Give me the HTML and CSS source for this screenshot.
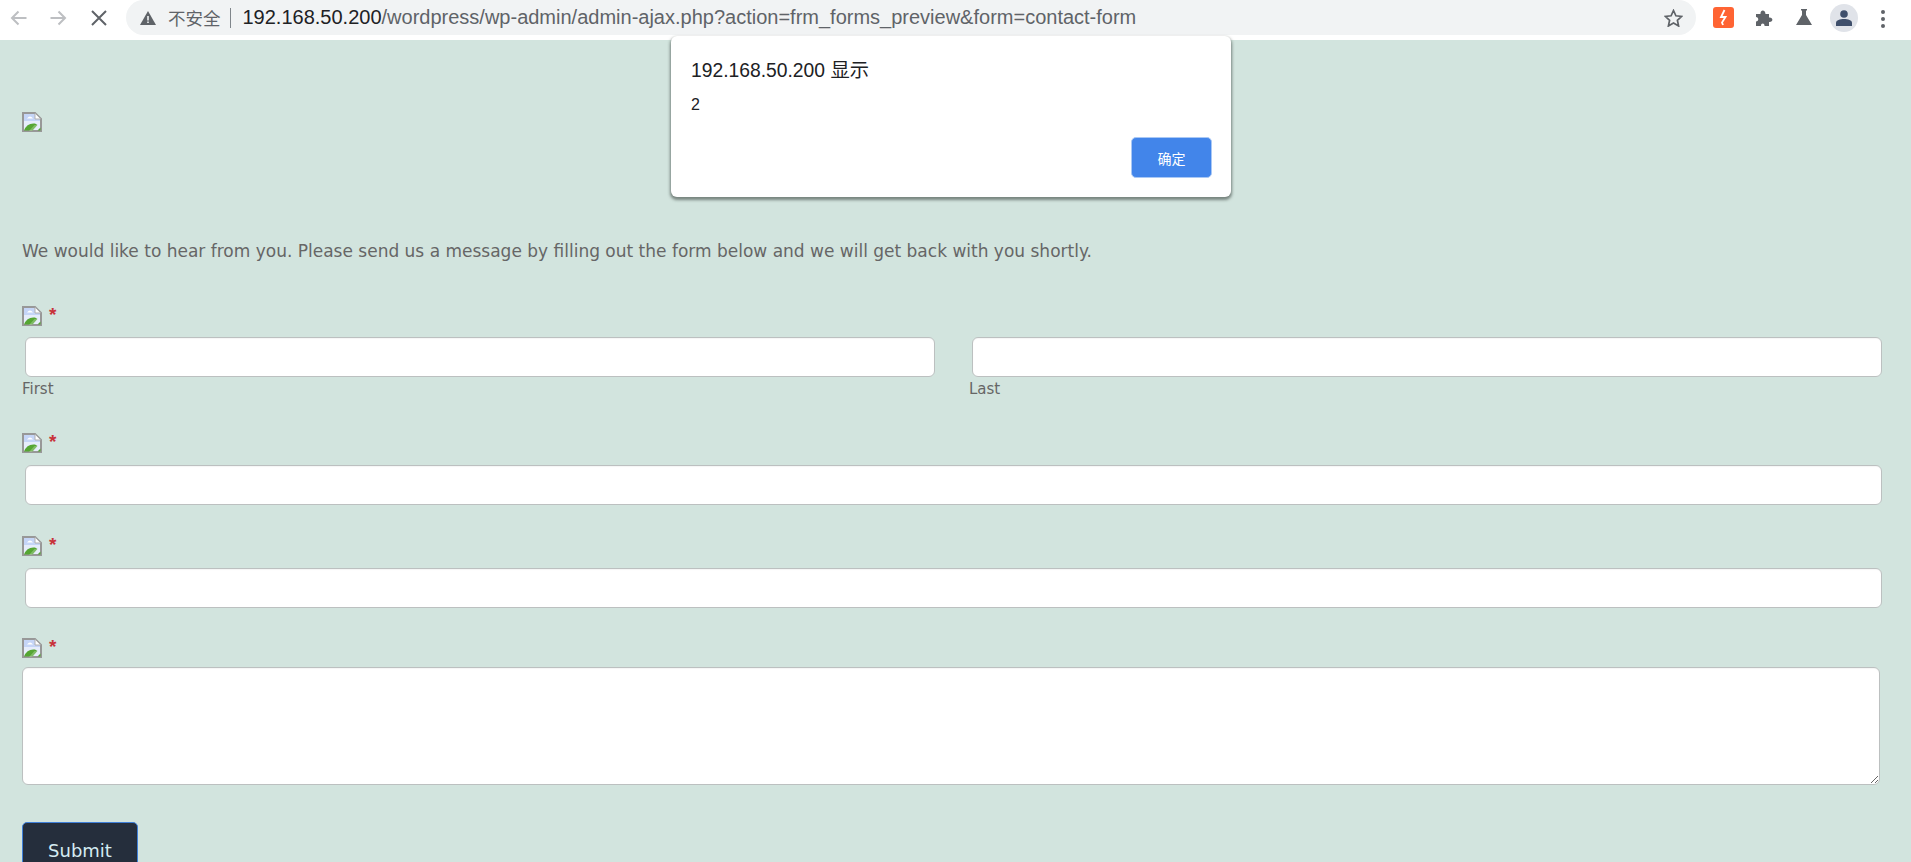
FILE: index.html
```html
<!DOCTYPE html>
<html>
	<head>
		<meta charset="utf-8">
		<link rel="stylesheet" href="styles.css">
	</head>
	<body>
		<svg class="defs" width="0" height="0">
			<symbol id="brokenImg" viewBox="0 0 20 20">
				<path d="M1 1H13L19 7V19H1Z" fill="#c5d5f7" stroke="#989898" stroke-width="2"/>
				<path d="M2 9H18V18H2Z" fill="#e6edfb"/>
				<path d="M5 6.500Q8 2.500 11 6.500Z" fill="#fff"/>
				<path d="M2 18.500Q5 10.500 13 11.500L15.500 13 10.500 18.500Z" fill="#55a633"/>
				<path d="M15.500 18.500L18.500 15.500V18.500Z" fill="#55a633"/>
				<path d="M12.500 13L16.500 13 10 19H7Z" fill="#fff" opacity=".25"/>
				<path d="M13 1.500V7H18.500" fill="#fff" stroke="#b0b0b0"/>
			</symbol>
		</svg>
		<header class="toolbar">
			<svg class="nav-icon" width="17" height="16" viewBox="0 0 17 16"><path d="M16.500 8H2M8.500 1.500L2 8l6.500 6.500" fill="none" stroke="#bdbfc2" stroke-width="2"/></svg>
			<svg class="nav-icon forward" width="17" height="16" viewBox="0 0 17 16"><path d="M.5 8H15M8.500 1.500L15 8l-6.500 6.500" fill="none" stroke="#bdbfc2" stroke-width="2"/></svg>
			<svg class="nav-icon stop" width="16" height="16" viewBox="0 0 16 16"><path d="M1 1L15 15M15 1L1 15" fill="none" stroke="#5f6368" stroke-width="2"/></svg>
			<div class="omnibox">
				<svg class="warn" width="16" height="14" viewBox="0 0 16 14"><path d="M8 0L16 14H0Z" fill="#5f6368"/><path d="M7.200 5H8.800V9.500H7.200ZM7.200 10.500H8.800V12H7.200Z" fill="#f1f3f4"/></svg>
				<span class="not-secure">不安全</span>
				<span class="sep"></span>
				<span class="url"><b>192.168.50.200</b>/wordpress/wp-admin/admin-ajax.php?action=frm_forms_preview&amp;form=contact-form</span>
				<svg class="star" width="19" height="18" viewBox="0 0 19 18"><path d="M9.500 1.500l2.400 5.300 5.800.6-4.300 3.900 1.200 5.700-5.100-2.900-5.100 2.900 1.200-5.700L1.300 7.400l5.800-.6Z" fill="none" stroke="#5f6368" stroke-width="1.700"/></svg>
			</div>
			<svg class="ext-bolt" width="21" height="21" viewBox="0 0 21 21"><rect width="21" height="21" rx="3" fill="#ff6433"/><path d="M11.500 3L8 10H12.500L9 15.500 10 18" fill="none" stroke="#fff" stroke-width="1.800"/></svg>
			<svg class="ext-puzzle" width="18" height="18" viewBox="0 0 18 18"><path d="M1 5H5.500C5 1 10 0 10.500 5H14V8.500C18.500 8 18.500 13.500 14 13V17H9.500C10 13.500 5.500 13.500 6 17H1V12.500C4 12.500 4 8 1 8Z" fill="#5f6368"/></svg>
			<svg class="ext-flask" width="16" height="16" viewBox="0 0 16 16"><path d="M5 0H11V1.500H10V6L16 16H0L6 6V1.500H5Z" fill="#5f6368"/></svg>
			<div class="avatar">
				<svg width="16" height="16" viewBox="0 0 16 16"><circle cx="8" cy="4" r="3.800" fill="#3f4f6b"/><path d="M0 16V13C0 10 4 9 8 9S16 10 16 13V16Z" fill="#3f4f6b"/></svg>
			</div>
			<div class="dots"><i></i><i></i><i></i></div>
		</header>

		<main class="page">
			<svg class="broken logo"><use href="#brokenImg"/></svg>
			<p class="intro">We would like to hear from you. Please send us a message by filling out the form below and we will get back with you shortly.</p>
			<form>
				<div class="label-row name-label"><svg class="broken"><use href="#brokenImg"/></svg><span class="req">*</span></div>
				<div class="name-row">
					<div>
						<input type="text">
						<div class="sub">First</div>
					</div>
					<div>
						<input type="text">
						<div class="sub">Last</div>
					</div>
				</div>
				<div class="label-row email-label"><svg class="broken"><use href="#brokenImg"/></svg><span class="req">*</span></div>
				<input type="text">
				<div class="label-row subject-label"><svg class="broken"><use href="#brokenImg"/></svg><span class="req">*</span></div>
				<input type="text">
				<div class="label-row message-label"><svg class="broken"><use href="#brokenImg"/></svg><span class="req">*</span></div>
				<textarea></textarea>
				<button class="submit" type="button">Submit</button>
			</form>
		</main>

		<div class="alert">
			<div class="alert-title">192.168.50.200 显示</div>
			<div class="alert-msg">2</div>
			<div class="alert-actions"><button type="button">确定</button></div>
		</div>
	</body>
</html>
```

FILE: styles.css
```css
html, body {
	margin: 0;
	height: 862px;
	overflow: hidden;
}
body {
	font-family: "DejaVu Sans", sans-serif;
	background: #d2e4de;
	position: relative;
}
.defs {
	position: absolute;
}

.toolbar {
	height: 40px;
	background: #fff;
	display: flex;
	align-items: flex-start;
	font-family: "Liberation Sans", "Noto Sans CJK SC", sans-serif;
}
.toolbar > svg, .avatar, .dots {
	flex: none;
}
.nav-icon {
	margin: 10px 0 0 10px;
}
.nav-icon.forward {
	margin-left: 23px;
}
.nav-icon.stop {
	margin-left: 24px;
}
.omnibox {
	width: 1570px;
	height: 35px;
	margin-left: 19px;
	background: #f1f3f4;
	border-radius: 18px;
	display: flex;
	align-items: center;
	font-size: 20px;
	color: #5f6368;
	white-space: nowrap;
}
.warn {
	margin-left: 14px;
}
.not-secure {
	margin-left: 12px;
	font-size: 17.500px;
}
.sep {
	width: 1px;
	height: 20px;
	background: #80868b;
	margin: 0 12px 0 9px;
}
.url b {
	font-weight: normal;
	color: #202124;
}
.star {
	margin-left: auto;
	margin-right: 13px;
}
.ext-bolt {
	margin: 7px 0 0 17px;
}
.ext-puzzle {
	margin: 9px 0 0 21px;
}
.ext-flask {
	margin: 9px 0 0 23px;
}
.avatar {
	width: 28px;
	height: 28px;
	margin: 4px 0 0 18px;
	border-radius: 50%;
	background: #e0e3e9;
	display: flex;
	align-items: center;
	justify-content: center;
}
.dots {
	margin: 10px 0 0 23px;
	display: flex;
	flex-direction: column;
	gap: 3px;
}
.dots i {
	width: 4px;
	height: 4px;
	border-radius: 50%;
	background: #5f6368;
}

.page {
	padding: 72px 29px 0 22px;
}
.broken {
	display: block;
	width: 20px;
	height: 20px;
	flex: none;
}
.intro {
	margin: 108px 0 0;
	font-size: 17px;
	line-height: 22px;
	color: #666;
}
.label-row {
	height: 20px;
	display: flex;
	gap: 7px;
}
.req {
	color: #c8323a;
	font-family: "Liberation Sans", sans-serif;
	font-weight: bold;
	font-size: 19px;
	line-height: 20px;
	margin-top: -1px;
}
.name-label {
	margin: 44px 0 11px;
}
.email-label {
	margin: 35px 0 12px;
}
.subject-label {
	margin: 31px 0 12px;
}
.message-label {
	margin: 30px 0 9px;
}
input, textarea {
	display: block;
	box-sizing: border-box;
	background: #fff;
	border: 1px solid #bcc0c0;
	border-radius: 6px;
	box-shadow: inset 0 1px 1px rgba(0, 0, 0, .04);
	padding: 0;
	margin: 0;
}
input {
	width: calc(100% - 3px);
	height: 40px;
	margin-left: 3px;
}
textarea {
	width: calc(100% - 2px);
	height: 118px;
}
.name-row {
	display: grid;
	grid-template-columns: 913px 1fr;
	column-gap: 34px;
}
.sub {
	font-size: 15px;
	line-height: 18px;
	margin: 3px 0 0;
	color: #666;
}
.submit {
	display: block;
	margin-top: 37px;
	width: 116px;
	height: 56px;
	padding: 0;
	background: #252e3c;
	border: 1px solid #3f7fd8;
	border-radius: 5px;
	color: #d5ecf2;
	font-family: "DejaVu Sans", sans-serif;
	font-size: 18px;
}

.alert {
	position: absolute;
	left: 671px;
	top: 36px;
	width: 560px;
	height: 161px;
	box-sizing: border-box;
	padding: 24px 19px 0 20px;
	background: #fff;
	border-radius: 6px;
	box-shadow: 0 2px 3px 1px rgba(60, 70, 65, .6);
	font-family: "Liberation Sans", "Noto Sans CJK SC", sans-serif;
	color: #202124;
}
.alert-title {
	font-size: 19.300px;
	line-height: 22px;
}
.alert-msg {
	margin-top: 13px;
	font-size: 16px;
	line-height: 20px;
}
.alert-actions {
	display: flex;
	justify-content: flex-end;
	margin-top: 22px;
}
.alert-actions button {
	width: 81px;
	height: 41px;
	background: #4285ea;
	border: 1px solid #a9c8f5;
	border-radius: 5px;
	color: #fff;
	font-family: "Noto Sans CJK SC", sans-serif;
	font-size: 14px;
}
```
